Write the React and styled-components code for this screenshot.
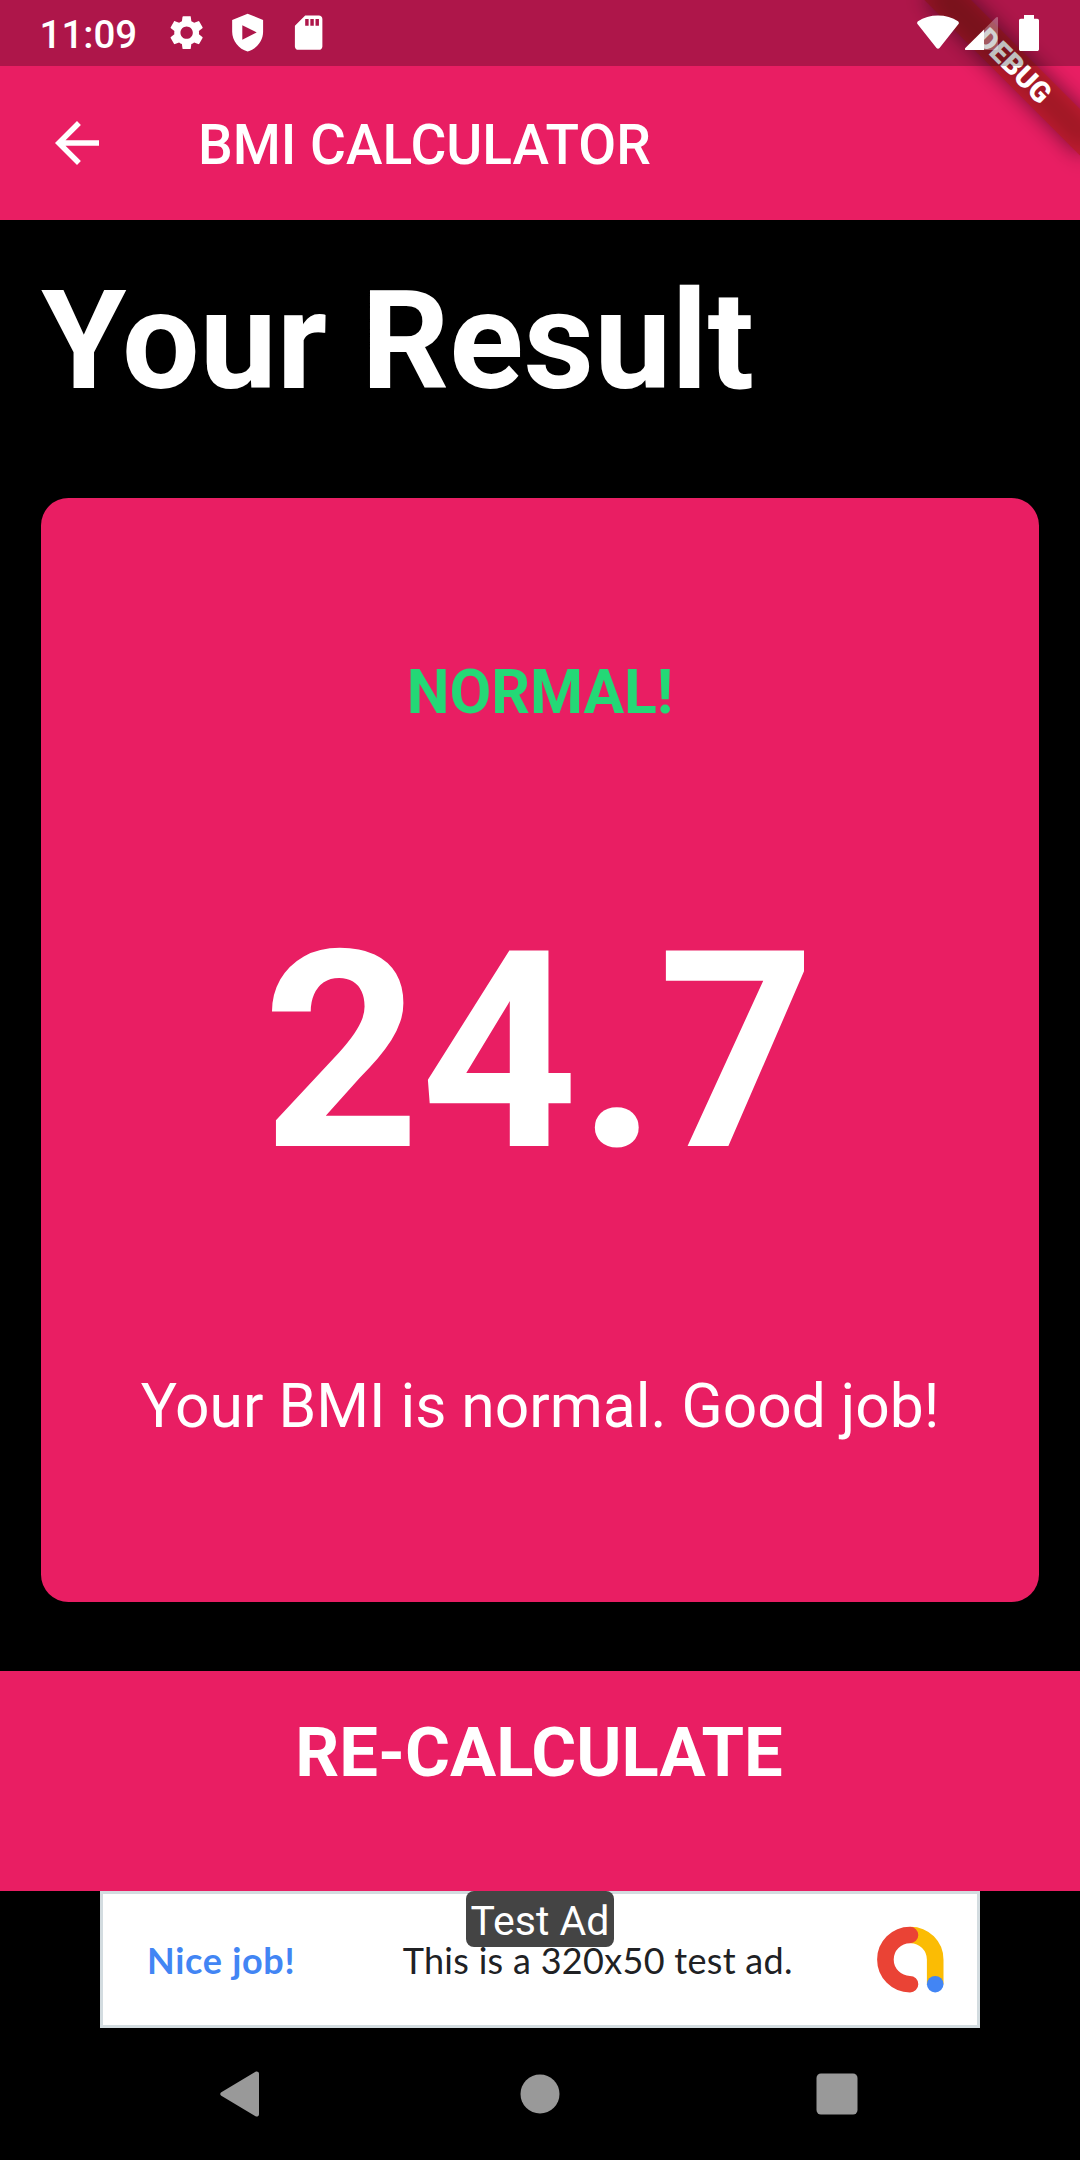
import React from 'react';
import styled, { createGlobalStyle } from 'styled-components';
import { MdArrowBack, MdSettings, MdSdCard } from 'react-icons/md';

const pink = '#E91E63';

const App = () => {
  const bmi = 24.7;
  const result = 'Normal!';
  const message = 'Your BMI is normal. Good job!';

  return (
    <>
      <GlobalStyle />
      <Screen>
        <AppBar>
          <BackButton aria-label="Back">
            <MdArrowBack size={66} />
          </BackButton>
          <AppTitle>BMI CALCULATOR</AppTitle>
        </AppBar>
        <Heading>Your Result</Heading>
        <Card>
          <Result>{result}</Result>
          <Bmi>{bmi}</Bmi>
          <Message>{message}</Message>
        </Card>
        <Recalculate>RE-CALCULATE</Recalculate>
        <Ad />
        <NavBar />
        <DebugBanner />
        <StatusBar />
      </Screen>
    </>
  );
};

const StatusBar = () => (
  <Status>
    <Clock>11:09</Clock>
    <Notifications>
      <MdSettings size={41.25} />
      <svg width="41.25" height="41.25" viewBox="0 0 24 24" fill="currentColor">
        <path
          fillRule="evenodd"
          d="M12 1L3 4.6v6.9c0 5.2 3.8 10.1 9 11.5 5.2-1.4 9-6.3 9-11.5V4.6L12 1zM8.9 7.7l8.4 4.2-8.4 4.3V7.7z"
        />
      </svg>
      <MdSdCard size={41.25} />
    </Notifications>
    <System>
      <svg width="42" height="36" viewBox="0 0 42 36">
        <path
          d="M.7 9.2C-.2 8.3 0 7 1 6.3 6.6 2.5 13.5.5 21 .5s14.4 2 20 5.8c1 .7 1.2 2 .3 2.9L22.5 32.9c-.8 1-2.2 1-3 0z"
          fill="#fff"
        />
      </svg>
      <svg width="33" height="36" viewBox="0 0 33 36">
        <path d="M19 14.5L31 2.5c1-1 2-.6 2 .6V33c0 1.2-.8 2-2 2H19z" fill="#fff" opacity="0.3" />
        <path d="M19 14.5V35H1C0 35-.5 34 .3 33z" fill="#fff" />
      </svg>
      <svg width="20" height="36" viewBox="0 0 20 36">
        <path
          d="M5 0h10v3.7h3.2c1 0 1.8.8 1.8 1.8v28.7c0 1-.8 1.8-1.8 1.8H1.8C.8 36 0 35.2 0 34.2V5.5c0-1 .8-1.8 1.8-1.8H5z"
          fill="#fff"
        />
      </svg>
    </System>
  </Status>
);

const DebugBanner = () => (
  <Corner>
    <Ribbon>
      <span>DEBUG</span>
    </Ribbon>
  </Corner>
);

const Ad = () => (
  <AdRow>
    <AdBox>
      <AdHeadline>Nice job!</AdHeadline>
      <AdText>This is a 320x50 test ad.</AdText>
      <svg width="68" height="68" viewBox="0 0 68 68" fill="none" strokeWidth="16.6">
        <path d="M33.5 9A24.7 24.7 0 0 1 58.2 33.7V58" stroke="#FBBC04" />
        <path d="M33 9A24.6 24.6 0 0 0 33 58.2" stroke="#EA4335" strokeLinecap="round" />
        <circle cx="58.2" cy="58.2" r="8.3" fill="#4285F4" />
      </svg>
    </AdBox>
    <AdLabel>Test Ad</AdLabel>
  </AdRow>
);

const NavBar = () => (
  <Nav>
    <svg width="40" height="46" viewBox="0 0 40 46">
      <path d="M1.3 21.2L35.5.8C37 0 39 .8 39 2.8v40.4c0 2-2 2.8-3.5 2L1.3 24.8c-1.4-.9-1.4-2.7 0-3.6z" />
    </svg>
    <svg width="40" height="40" viewBox="0 0 40 40">
      <circle cx="20" cy="20" r="19.5" />
    </svg>
    <svg width="42" height="42" viewBox="0 0 42 42">
      <rect x="0.5" y="0.5" width="41" height="41" rx="4.5" />
    </svg>
  </Nav>
);

export default App;

const GlobalStyle = createGlobalStyle`
  * {
    box-sizing: border-box;
  }
  body {
    margin: 0;
    background: #000;
    font-family: Roboto, sans-serif;
  }
  svg {
    display: block;
    flex-shrink: 0;
  }
`;

const Screen = styled.div`
  position: relative;
  display: flex;
  flex-direction: column;
  width: 1080px;
  height: 2160px;
  overflow: hidden;
  background: #000;
  color: #fff;
`;

const AppBar = styled.header`
  display: flex;
  align-items: center;
  height: 220px;
  padding: 66px 44px 0;
  background: ${pink};
`;

const BackButton = styled.button`
  display: flex;
  width: 66px;
  margin-right: 88px;
  padding: 0;
  border: 0;
  background: none;
  color: #fff;
`;

const AppTitle = styled.h1`
  margin: 3px 0 0;
  font-size: 55px;
  font-weight: 500;
  line-height: 66px;
`;

const Heading = styled.h2`
  height: 278.3px;
  margin: 0;
  padding: 40.5px 41.25px 0;
  font-size: 137.5px;
  font-weight: 700;
  line-height: 161px;
`;

const Card = styled.main`
  display: flex;
  flex-direction: column;
  align-items: center;
  justify-content: space-evenly;
  height: 1103.3px;
  margin: 0 41.25px 69.4px;
  border-radius: 27.5px;
  background: ${pink};
`;

const Result = styled.div`
  margin-top: -1px;
  color: #24d876;
  font-size: 60.5px;
  font-weight: 700;
  line-height: 71px;
  text-transform: uppercase;
`;

const Bmi = styled.div`
  padding: 3px 2px 0 0;
  font-size: 275px;
  font-weight: 700;
  line-height: 322px;
`;

const Message = styled.div`
  margin-top: -2px;
  font-size: 60.5px;
  line-height: 71px;
`;

const Recalculate = styled.button`
  height: 220px;
  padding: 0 2px 57px 0;
  border: 0;
  background: ${pink};
  color: #fff;
  font-family: inherit;
  font-size: 68.75px;
  font-weight: 700;
`;

const AdRow = styled.aside`
  position: relative;
  display: flex;
  justify-content: center;
  height: 137px;
`;

const AdBox = styled.div`
  display: flex;
  align-items: center;
  width: 880px;
  padding: 1px 32px 0 44px;
  border: 3px solid #d3dce0;
  background: #fff;
  font-family: Lato, sans-serif;
  font-size: 36px;
  white-space: nowrap;
`;

const AdHeadline = styled.div`
  width: 256px;
  color: #4285f4;
  font-weight: 700;
  letter-spacing: 0.7px;
`;

const AdText = styled.div`
  width: 475px;
  color: #202124;
  letter-spacing: 0.3px;
`;

const AdLabel = styled.div`
  position: absolute;
  top: 0;
  left: 466px;
  width: 148px;
  height: 56px;
  border-radius: 8px;
  background: #444;
  font-size: 41px;
  line-height: 60px;
  text-align: center;
  white-space: nowrap;
`;

const Nav = styled.nav`
  display: grid;
  grid-template-columns: 40px 40px 42px;
  align-items: center;
  column-gap: 260px;
  height: 132px;
  padding: 1px 0 0 220px;
  fill: #999;

  svg:last-child {
    margin-left: -4px;
  }
`;

const Corner = styled.div`
  position: absolute;
  top: 0;
  right: 0;
  width: 220px;
  height: 220px;
  overflow: hidden;
`;

/* 45deg ribbon, turned round the top right corner of the screen */
const Ribbon = styled.div`
  position: absolute;
  top: 77px;
  left: 110px;
  width: 220px;
  height: 33px;
  transform: rotate(45deg);
  transform-origin: 110px -77px;
  font-size: 28.8px;
  font-weight: 900;
  line-height: 33px;
  text-align: center;

  &::before,
  &::after {
    content: '';
    position: absolute;
    inset: 0;
  }
  &::before {
    background: rgba(0, 0, 0, 0.5);
    filter: blur(10.9px);
  }
  &::after {
    background: rgba(183, 28, 28, 0.63);
  }
  span {
    position: relative;
    z-index: 1;
  }
`;

const Status = styled.div`
  position: absolute;
  top: 0;
  left: 0;
  display: flex;
  align-items: center;
  width: 1080px;
  height: 66px;
  padding: 0 41px 0 39.5px;
  background: rgba(0, 0, 0, 0.25);
`;

const Clock = styled.div`
  width: 126.5px;
  padding-top: 2px;
  font-size: 38.5px;
  font-weight: 500;
`;

const Notifications = styled.div`
  display: flex;
  gap: 19.5px;
`;

const System = styled.div`
  display: flex;
  gap: 6.5px;
  margin-left: auto;

  svg:last-child {
    margin-left: 14.5px;
  }
`;
